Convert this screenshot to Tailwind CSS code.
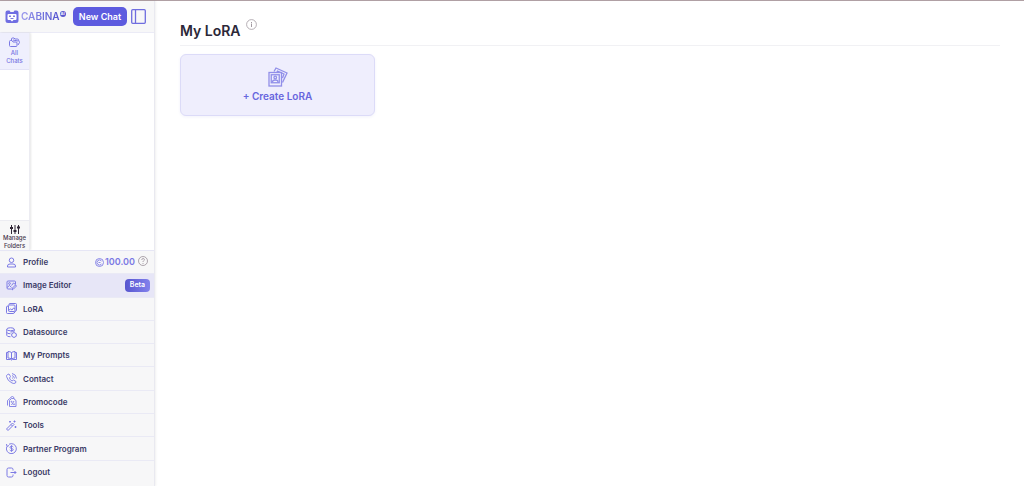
<!DOCTYPE html>
<html lang="en">
	<head>
		<title>My LoRA | Cabina AI</title>
		<meta charset="utf-8" />
		<meta name="viewport" content="width=device-width, initial-scale=1" />
		<script src="https://cdn.jsdelivr.net/npm/@tailwindcss/browser@4"></script>
	</head>
	<body class="bg-white font-['Inter',sans-serif] text-[#3a3a66]">
		<div class="flex h-screen border-t border-[#b0a0a4]">
			<aside class="flex w-[155px] shrink-0 flex-col border-r border-[#e9e9f0] bg-[#f7f7f8] shadow-[1px_0_2px_rgba(0,0,0,0.06)]">
				<header class="flex h-8 shrink-0 items-center border-b border-[#ebebf6] pr-2 pl-[5px]">
					<a href="#" class="flex items-center" aria-label="Cabina AI">
						<svg class="h-[14px] w-[14px]" viewBox="0 0 28 28" fill="none">
							<path d="M1 5q0-4 4-4h4l2 3h6l2-3h4q4 0 4 4v16q0 5-5 5H6q-5 0-5-5z" fill="#706ee2" />
							<path d="M7 8h14q2 0 2 2v8q0 2-2 2h-4l-3 3-3-3H7q-2 0-2-2v-8q0-2 2-2z" fill="#fff" />
							<path d="M10 11v3M18 11v3" stroke="#5a57d6" stroke-width="3" />
							<path d="M11 17h6" stroke="#5a57d6" stroke-width="1.6" />
						</svg>
						<span class="ml-[2px] bg-linear-to-r from-[#9a98ec] to-[#5451cf] bg-clip-text text-[10px] font-semibold text-transparent">CABINA</span>
						<span class="mb-[6px] flex h-[6px] w-[6px] items-center justify-center rounded-full bg-[#5856cf] text-[4px] font-bold text-white">AI</span>
					</a>
					<button type="button" class="ml-auto h-[19px] w-[54px] rounded-[5px] bg-[#5d5bdf] text-[9px] font-semibold text-white">New Chat</button>
					<button type="button" class="ml-[4px]" aria-label="Toggle sidebar">
						<svg class="h-[15px] w-[15px]" viewBox="0 0 15 15" fill="none" stroke="#6f6ddf" stroke-width="1.3">
							<rect x="0.7" y="0.7" width="13.6" height="13.6" rx="1" />
							<path d="M4.500 1v13" />
						</svg>
					</button>
				</header>

				<div class="flex min-h-0 flex-1 bg-white">
					<div class="flex w-[30px] flex-col justify-between border-r border-[#ececf2] text-center text-[6px] leading-[8px] font-medium shadow-[1px_0_2px_rgba(0,0,0,0.1)]">
						<button type="button" class="flex h-[37px] flex-col items-center border-b border-[#e3e3f7] bg-[#efeffd] pt-[4px] text-[#7673e2]">
							<svg class="mb-[1px] h-[11px] w-[11px] shrink-0" viewBox="0 0 22 22" fill="none" stroke="#7b79e4" stroke-width="2" stroke-linejoin="round">
								<path d="M5 7V4q0-2 2-2h3l2 2h5q2 0 2 2l2 5-3 5" />
								<path d="M1 9q0-2 2-2h3l2 3h6q2 0 2 2v5q0 2-2 2H3q-2 0-2-2z" />
								<path d="M8 6l10 2" />
							</svg>
							<span>All<br />Chats</span>
						</button>
						<button type="button" class="flex h-[30px] flex-col items-center border-t border-[#ececf2] bg-[#f7f7f8] pt-[3px] text-[#46364c]">
							<svg class="mt-[1px] h-[9px] w-[10px] shrink-0" viewBox="0 0 20 18" stroke="#2f2535" stroke-width="2">
								<path d="M3 0v18M10 0v18M17 0v18" />
								<path d="M0 6h6M7 12h6M14 5h6" stroke-width="4" />
							</svg>
							<span>Manage<br />Folders</span>
						</button>
					</div>
				</div>

				<nav class="mb-[2px] grid h-[234px] shrink-0 auto-rows-fr divide-y divide-[#eaeaf5] border-t border-[#e6e6f5] text-[8px] font-semibold">
					<div class="flex items-center pr-[6px]">
						<a href="#" class="flex flex-1 items-center gap-[6px] pl-[6px]">
							<svg class="h-[11px] w-[11px]" viewBox="0 0 22 22" fill="none" stroke="#7b79e4" stroke-width="2">
								<circle cx="11" cy="6.500" r="4.500" />
								<path d="M3 20v-2q0-4 5-4h6q5 0 5 4v2z" stroke-linejoin="round" />
							</svg>
							Profile
						</a>
						<svg class="mr-[1px] h-[9px] w-[9px]" viewBox="0 0 18 18" fill="none" stroke="#8b89e8">
							<circle cx="9" cy="9" r="8" stroke-width="2" />
							<path d="M13 6a5 5 0 1 0 0 6M11 9H7" stroke-width="2" />
						</svg>
						<span class="text-[9px] text-[#7b79e4]">100.00</span>
						<button type="button" class="mb-[3px] ml-[3px]" aria-label="Balance help">
							<svg class="h-[10px] w-[10px]" viewBox="0 0 20 20" fill="none" stroke="#9a9199" stroke-width="1.6">
								<circle cx="10" cy="10" r="9" />
								<path d="M7.500 8q0-3 2.700-3 2.600 0 2.600 2.300 0 1.600-1.600 2.400-1.200.7-1.200 2.300M10 14v2" />
							</svg>
						</button>
					</div>
					<a href="#" class="flex items-center gap-[6px] bg-[#e7e6f7] pr-[4px] pl-[6px]">
						<svg class="h-[11px] w-[11px]" viewBox="0 0 22 22" fill="none" stroke="#7b79e4" stroke-width="1.9">
							<path d="M11 18H4q-2 0-2-2V4q0-2 2-2h13q2 0 2 2v5" />
							<circle cx="7" cy="7" r="1.800" />
							<path d="M2 15l5-4 4 4M11 11l4-5 4 3" />
							<path d="M12 20l1-4 6-6 2 2-6 6z" stroke-linejoin="round" />
						</svg>
						Image Editor
						<span class="ml-auto flex h-[13px] w-[25px] items-center justify-center rounded-[4px] bg-linear-to-r from-[#5755cf] to-[#8381ec] text-[7px] text-white">Beta</span>
					</a>
					<a href="#" class="flex items-center gap-[6px] pl-[6px]">
						<svg class="h-[11px] w-[11px]" viewBox="0 0 22 22" fill="none" stroke="#7b79e4" stroke-width="2">
							<path d="M6 4V3q0-2 2-2h11q2 0 2 2v11q0 2-3 3-1 4-4 4H3q-2 0-2-2V8q0-2 3-2" />
							<rect x="5" y="4" width="13" height="13" rx="2" />
							<path d="M5 15l4-3 3 2 3-4 3 2" />
						</svg>
						LoRA
					</a>
					<a href="#" class="flex items-center gap-[6px] pl-[6px]">
						<svg class="h-[11px] w-[11px]" viewBox="0 0 22 22" fill="none" stroke="#7b79e4" stroke-width="2">
							<ellipse cx="9" cy="4.500" rx="7.500" ry="3" />
							<path d="M1.500 4.500v12q0 3 7.500 3M16.500 4.500V9M1.500 10.500q0 3 7.500 3M9 10q4 0 7-2" />
							<path d="M16 11l4.500 2.500v5L16 21l-4.500-2.500v-5z" />
						</svg>
						Datasource
					</a>
					<a href="#" class="flex items-center gap-[6px] pl-[6px]">
						<svg class="h-[11px] w-[11px]" viewBox="0 0 22 22" fill="none" stroke="#7b79e4" stroke-width="2" stroke-linejoin="round">
							<path d="M11 5Q8 3 4 3v13q4 0 7 2 3-2 7-2V3q-4 0-7 2zM11 5v13" />
							<path d="M4 5H1v14h8l2 1 2-1h8V5h-3" />
						</svg>
						My Prompts
					</a>
					<a href="#" class="flex items-center gap-[6px] pl-[6px]">
						<svg class="h-[11px] w-[11px]" viewBox="0 0 22 22" fill="none" stroke="#7b79e4" stroke-width="1.8" stroke-linejoin="round">
							<path d="M3 3l3-1 3 5-2 3q1 4 5 6l3-2 5 3-1 3q-3 2-7 0Q3 16 1 7q0-3 2-4z" />
							<path d="M12 1q8 1 9 10M12 5q4 1 5 6M12 9q1 0 1 2" />
						</svg>
						Contact
					</a>
					<a href="#" class="flex items-center gap-[6px] pl-[6px]">
						<svg class="h-[11px] w-[11px]" viewBox="0 0 22 22" fill="none" stroke="#7b79e4" stroke-width="1.8" stroke-linejoin="round">
							<path d="M7 21V9l4-4h4l5 4v12zM3 19V9l6-5M9 4q1-3 4-3t3 5" />
							<path d="M16 10l-5 8" />
							<circle cx="11" cy="11.500" r="1" />
							<circle cx="16" cy="16.500" r="1" />
						</svg>
						Promocode
					</a>
					<a href="#" class="flex items-center gap-[6px] pl-[6px]">
						<svg class="h-[11px] w-[11px]" viewBox="0 0 22 22" fill="none" stroke="#7b79e4" stroke-width="2" stroke-linejoin="round">
							<path d="M1 18L13 6l3 3L4 21zM10 9l3 3" />
							<path d="M8 2v3M6 3.500h4M17 1v4M15 3h4M19 12v4M17 14h4" />
						</svg>
						Tools
					</a>
					<a href="#" class="flex items-center gap-[6px] pl-[6px]">
						<svg class="h-[11px] w-[11px]" viewBox="0 0 22 22" fill="none" stroke="#7b79e4" stroke-width="1.900">
							<path d="M6 2.500a10 10 0 1 1-4.500 5M1 2l1 5 4-2" />
							<path d="M14.500 8q-1-1.500-3.500-1.500-3 0-3 2.200 0 2 3 2.300 3.500.4 3.500 2.500 0 2-3.500 2-2.500 0-3.500-1.500M11 4.500v13" />
						</svg>
						Partner Program
					</a>
					<a href="#" class="flex items-center gap-[6px] pl-[6px]">
						<svg class="h-[11px] w-[11px]" viewBox="0 0 22 22" fill="none" stroke="#7b79e4" stroke-width="2" stroke-linejoin="round">
							<path d="M14 7V5q0-3-3-3H5Q2 2 2 5v12q0 3 3 3h6q3 0 3-3v-2M9 11h11M17 8l3 3-3 3" />
						</svg>
						Logout
					</a>
				</nav>
			</aside>

			<main class="flex-1 pt-5 pr-6 pl-[25px]">
				<div class="flex h-[25px] items-start border-b border-[#f1f1f4]">
					<h1 class="text-[14px] leading-[20px] font-semibold text-[#2c2838]">My LoRA</h1>
					<button type="button" class="-mt-[2px] ml-[5px]" aria-label="About LoRA">
						<svg class="h-[11px] w-[11px]" viewBox="0 0 22 22" fill="none" stroke="#a39aa2" stroke-width="1.600">
							<circle cx="11" cy="11" r="9.800" />
							<path d="M11 9v7M11 6v2" stroke-width="2" />
						</svg>
					</button>
				</div>
				<button type="button" class="mt-2 flex h-[62px] w-[195px] flex-col items-center rounded-[6px] border border-[#dcdbf8] bg-[#efeefd] pt-[12px] text-[10px] leading-[14px] font-semibold text-[#6866de] shadow-[0_1px_3px_rgba(90,90,200,0.08)]">
					<svg class="mb-[2px] h-[20px] w-[20px] shrink-0" viewBox="0 0 40 40" fill="none" stroke="#918fe9" stroke-width="2.600">
						<path d="M12 9l4-7 22 10-9 19" />
						<path d="M18 10l1-2 13 6-3 8" />
						<rect x="2" y="11" width="25" height="27" />
						<rect x="6.500" y="15.500" width="16" height="16" />
						<circle cx="14.500" cy="21" r="2.600" />
						<path d="M9 31v-1q0-4 5.500-4t5.500 4v1" />
					</svg>
					+ Create LoRA
				</button>
			</main>
		</div>
	</body>
</html>
